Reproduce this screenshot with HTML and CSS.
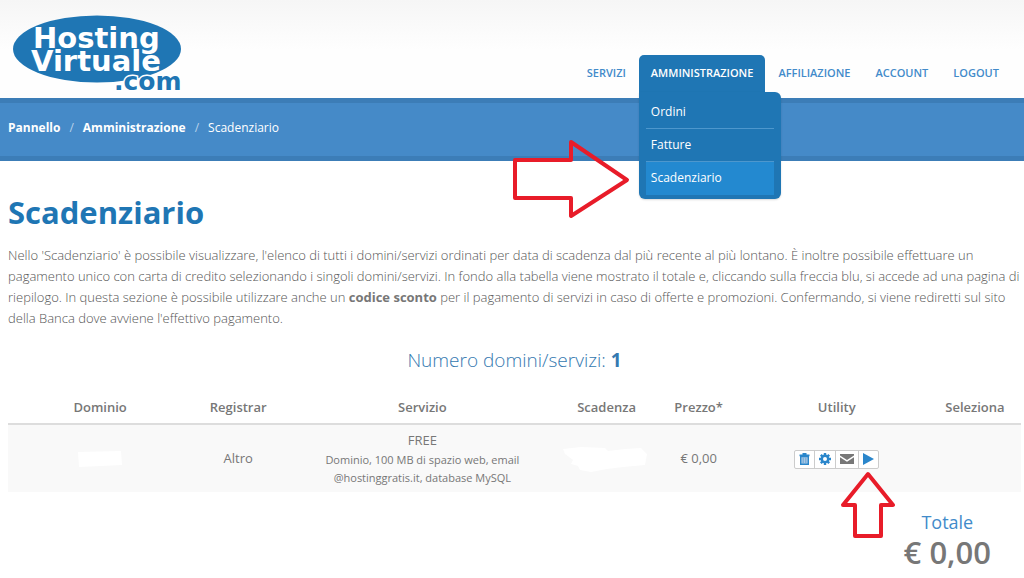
FILE: index.html
```html
<!DOCTYPE html>
<html lang="it">
<head>
  <meta charset="UTF-8">
  <meta name="viewport" content="width=device-width, initial-scale=1.0">
  <title>Scadenziario - Hosting Virtuale</title>
  <link rel="stylesheet" href="styles.css">
</head>
<body>

  <header class="header">
    <a class="logo" href="#" aria-label="Hosting Virtuale.com">
      <svg width="176" height="85" viewBox="0 0 176 85">
        <ellipse cx="85" cy="36" rx="84" ry="33.5" fill="#1f76b4"/>
        <text class="logo-name" x="21" y="35">Hosting</text>
        <text class="logo-name" x="19" y="58">Virtuale</text>
        <text class="logo-com" x="102" y="77">.com</text>
      </svg>
    </a>

    <nav class="nav">
      <ul class="nav-main">
        <li><a href="#">Servizi</a></li>
        <li class="active">
          <a href="#">Amministrazione</a>
          <ul class="dropdown">
            <li><a href="#">Ordini</a></li>
            <li><a href="#">Fatture</a></li>
            <li class="selected"><a href="#">Scadenziario</a></li>
          </ul>
          <svg class="arrow arrow-right" width="118" height="82" viewBox="0 0 118 82">
            <path d="M3 22H59V4L115 42L59 78V60H3Z"/>
          </svg>
        </li>
        <li><a href="#">Affiliazione</a></li>
        <li><a href="#">Account</a></li>
        <li><a href="#">Logout</a></li>
      </ul>
    </nav>
  </header>

  <!-- Breadcrumb -->
  <section class="page-top">
    <ul class="breadcrumb">
      <li><a href="#">Pannello</a></li>
      <li><a href="#">Amministrazione</a></li>
      <li>Scadenziario</li>
    </ul>
  </section>

  <main class="content">
    <h1>Scadenziario</h1>
    <p class="intro">Nello 'Scadenziario' è possibile visualizzare, l'elenco di tutti i domini/servizi ordinati per data di scadenza dal più recente al più lontano. È inoltre possibile effettuare un pagamento unico con carta di credito selezionando i singoli domini/servizi. In fondo alla tabella viene mostrato il totale e, cliccando sulla freccia blu, si accede ad una pagina di riepilogo. In questa sezione è possibile utilizzare anche un <strong>codice sconto</strong> per il pagamento di servizi in caso di offerte e promozioni. Confermando, si viene rediretti sul sito della Banca dove avviene l'effettivo pagamento.</p>

    <h2>Numero domini/servizi: <strong>1</strong></h2>

    <table class="domini">
      <colgroup>
        <col class="col-2"><col class="col-1"><col class="col-3"><col class="col-1"><col class="col-1"><col class="col-2"><col class="col-1">
      </colgroup>
      <thead>
        <tr>
          <th>Dominio</th>
          <th>Registrar</th>
          <th>Servizio</th>
          <th>Scadenza</th>
          <th>Prezzo*</th>
          <th>Utility</th>
          <th>Seleziona</th>
        </tr>
      </thead>
      <tbody>
        <tr>
          <td>
            <svg class="hidden-value" width="46" height="18" viewBox="0 0 46 18"><path d="M1 2L44 1L45 15L24 16L2 17Z"/></svg>
          </td>
          <td>Altro</td>
          <td>FREE<small>Dominio, 100 MB di spazio web, email @hostinggratis.it, database MySQL</small></td>
          <td>
            <svg class="hidden-value" width="88" height="26" viewBox="0 0 88 26"><path d="M0 3L18 1L42 2L45 5L62 3L78 2L84 8L82 19L60 21L44 23L28 26L17 24L15 20L8 18L10 14L2 8Z"/></svg>
          </td>
          <td>€ 0,00</td>
          <td>
            <div class="btn-group">
              <button type="button" aria-label="Elimina">
                <svg width="11" height="12" viewBox="0 0 11 12"><path fill="#2a86cb" d="M3.5 0H7.5V1.5H10.5V3.2H.5V1.5H3.5Z"/><path fill="#a9c8e4" stroke="#2a86cb" stroke-width="1.4" d="M1.7 3.5H9.3V11.2H1.7Z"/><path stroke="#6ba5d6" d="M4.2 4.5V10M6.8 4.5V10"/></svg>
              </button>
              <button type="button" aria-label="Impostazioni">
                <svg width="12" height="12" viewBox="0 0 12 12"><circle cx="6" cy="6" r="3.2" fill="none" stroke="#2a86cb" stroke-width="2.4"/><path stroke="#2a86cb" stroke-width="2.4" d="M6 0V2.5M6 9.5V12M0 6H2.5M9.5 6H12M1.8 1.8L3.4 3.4M8.6 8.6L10.2 10.2M10.2 1.8L8.6 3.4M3.4 8.6L1.8 10.2"/></svg>
              </button>
              <button type="button" aria-label="Email">
                <svg width="14" height="12" viewBox="0 0 14 12"><path fill="#777" d="M0 1H14V2.5L7 7L0 2.5ZM0 4.2L7 8.7L14 4.2V11H0Z"/></svg>
              </button>
              <button type="button" aria-label="Rinnova">
                <svg width="11" height="12" viewBox="0 0 11 12"><path fill="#2a86cb" d="M0 0L11 6L0 12Z"/></svg>
              </button>
              <svg class="arrow arrow-up" width="56" height="70" viewBox="0 0 56 70">
                <path d="M28 4L53 35H41V66H15V35H3Z"/>
              </svg>
            </div>
          </td>
          <td></td>
        </tr>
      </tbody>
    </table>

    <div class="totale">
      <span>Totale</span>
      <strong>€ 0,00</strong>
    </div>
  </main>

</body>
</html>
```
FILE: styles.css
```css
* {
  margin: 0;
  padding: 0;
  box-sizing: border-box;
}

body {
  background: #fff;
  color: #777;
  font-family: "Open Sans", Arial, sans-serif;
  font-size: 13px;
  line-height: 21px;
  overflow-x: hidden;
}

ul {
  list-style: none;
}

a {
  text-decoration: none;
}

/* Header */
.header {
  display: flex;
  justify-content: space-between;
  align-items: flex-end;
  height: 98px;
  padding: 0 13px 0 12px;
  background: linear-gradient(#f6f6f6, #fefefe 50px);
}

.logo svg {
  display: block;
}

.logo text {
  font-family: "DejaVu Sans", Verdana, sans-serif;
  font-weight: bold;
}

.logo-name {
  font-size: 29px;
  fill: #fff;
}

.logo-com {
  font-size: 25px;
  fill: #1f76b4;
  stroke: #fff;
  stroke-width: 3px;
  paint-order: stroke;
}

.nav-main {
  display: flex;
  gap: 1px;
}

.nav-main > li {
  position: relative;
}

.nav-main > li > a {
  display: block;
  height: 43px;
  padding: 7px 12px;
  border-radius: 5px 5px 0 0;
  color: #428bca;
  font-size: 11px;
  font-weight: 600;
  text-transform: uppercase;
}

.nav-main > .active > a {
  background: #1f76b4;
  color: #fff;
}

.dropdown {
  position: absolute;
  top: 37px;
  left: 0;
  z-index: 2;
  width: 142px;
  padding: 4px 7px;
  background: #1f76b4;
  border-radius: 0 6px 6px 6px;
  box-shadow: 0 1px 2px rgba(0, 0, 0, 0.15);
}

.dropdown a {
  display: block;
  padding: 5px;
  border-bottom: 1px solid #4d97cd;
  color: #fff;
  font-size: 12px;
  line-height: 22px;
}

.dropdown .selected a {
  background: #2389d0;
  border-bottom-color: #2389d0;
}

/* Breadcrumb */
.page-top {
  height: 63px;
  padding: 14px 8px;
  background: #458ac8;
  border-top: 5px solid #3c7db7;
  border-bottom: 5px solid #3c7db7;
}

.breadcrumb {
  display: flex;
  color: #fff;
  font-size: 12px;
}

.breadcrumb a {
  color: #fff;
  font-weight: bold;
}

.breadcrumb li + li::before {
  content: "/";
  padding: 0 9px;
  color: #b9d2ea;
}

/* Content */
.content {
  padding: 31px 3px 0 8px;
}

h1 {
  color: #1f76b4;
  font-size: 31px;
  line-height: 40px;
}

.intro {
  margin: 13px 0 19px;
  color: #555;
  font-weight: 300;
}

.intro strong {
  color: #777;
  font-weight: bold;
}

h2 {
  margin-bottom: 25px;
  color: #3579b0;
  font-size: 19px;
  font-weight: 300;
  line-height: 24px;
  text-align: center;
}

h2 strong {
  font-weight: bold;
}

.domini {
  width: 100%;
  border-collapse: collapse;
  table-layout: fixed;
  text-align: center;
}

.col-1 {
  width: 9.09%;
}

.col-2 {
  width: 18.18%;
}

.col-3 {
  width: 27.27%;
}

.domini th {
  padding: 0 4px 5px;
  border-bottom: 2px solid #ddd;
  font-weight: 600;
}

.domini td {
  padding: 5px 40px;
  background: #f9f9f9;
  vertical-align: middle;
}

.domini td:not(:nth-child(3)) {
  padding: 5px 0;
}

.domini small {
  display: block;
  font-size: 11px;
  line-height: 18px;
}

.hidden-value {
  display: block;
  margin: 0 auto;
  fill: #fff;
}

.btn-group {
  position: relative;
  display: inline-flex;
  vertical-align: middle;
  background: #fff;
  border: 1px solid #ccc;
  border-radius: 2px;
}

.btn-group button {
  padding: 2px 4px 3px;
  background: none;
  border: 0;
  border-right: 1px solid #ccc;
  cursor: pointer;
}

.btn-group button:nth-of-type(4) {
  border-right: 0;
}

.btn-group button svg {
  display: block;
}

.totale {
  display: flex;
  flex-direction: column;
  align-items: center;
  width: fit-content;
  margin: 16px 30px 0 auto;
}

.totale span {
  color: #428bca;
  font-size: 18px;
  line-height: 28px;
}

.totale strong {
  font-size: 31px;
  font-weight: 600;
  line-height: 32px;
}

/* Red arrows laid over the page */
.arrow {
  position: absolute;
  z-index: 3;
  fill: none;
  stroke: #e81c29;
  stroke-width: 4px;
  stroke-linejoin: round;
}

.arrow-right {
  top: 83px;
  right: 100%;
  margin-right: 9px;
}

.arrow-up {
  top: 100%;
  right: -18px;
  margin-top: 2px;
}
```
